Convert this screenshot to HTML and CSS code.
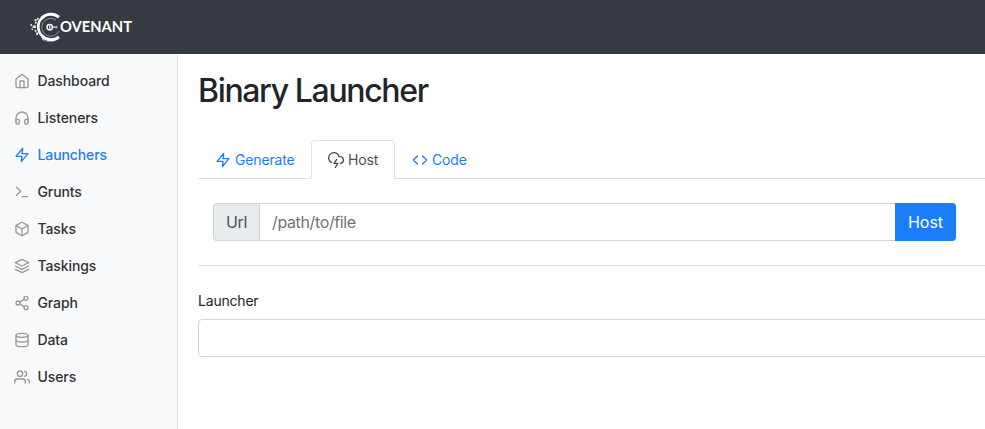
FILE: index.html
```html
<!DOCTYPE html>
<html lang="en">
<head>
<meta charset="utf-8">
<title>Covenant</title>
<link rel="stylesheet" href="styles.css">
</head>
<body>
<header class="navbar">
  <svg class="logo" width="104" height="32" viewBox="0 0 104 32" fill="none">
    <g stroke="#fff">
      <path d="M30 6.2A12.4 12.4 0 0 0 12.5 7.5" stroke-width="3"/>
      <path d="M14 6A12.4 12.4 0 0 0 14 25.5" stroke-width="2.6"/>
      <path d="M13 25A12.4 12.4 0 0 0 30 25.8" stroke-width="3"/>
      <path d="M27 9A9 9 0 1 0 30 20" stroke-width=".7" opacity=".6"/>
      <path d="M9.500 7A14 14 0 0 0 8.500 24" stroke-width="1.8" stroke-dasharray="2.5 1.6" opacity=".75"/>
      <path d="M13 28A14 14 0 0 0 25 29.500" stroke-width="1.2" stroke-dasharray="3 1.5" opacity=".7"/>
      <circle cx="20.7" cy="16.2" r="2.7" stroke-width="1.4"/>
      <path d="M20.7 14.8v3M23.500 16.200h2.500" stroke-width="1.2"/>
      <circle cx="27.3" cy="16.2" r=".8" stroke-width=".8"/>
    </g>
    <path fill="#fff" opacity=".8" d="M5.500 8h2v2h-2zM1.500 13h1.500v2H1.500zM3.500 14.500h2.500v2.500H3.500zM2.500 17.500h1.500v1.500H2.500zM7 21.500h2v2H7z"/>
    <path stroke="#fff" stroke-width="1.8" d="M54 11.300h5"/>
    <text class="wordmark" x="31" y="21" textLength="72" lengthAdjust="spacingAndGlyphs">OVENANT</text>
  </svg>
</header>
<div class="layout">
  <nav class="sidebar">
    <a class="item"><svg class="icon" viewBox="0 0 24 24"><path d="M3 9l9-7 9 7v11a2 2 0 0 1-2 2H5a2 2 0 0 1-2-2z"/><path d="M9 22V12h6v10"/></svg><span>Dashboard</span></a>
    <a class="item"><svg class="icon" viewBox="0 0 24 24"><path d="M3 18v-6a9 9 0 0 1 18 0v6"/><path d="M21 19a2 2 0 0 1-2 2h-1a2 2 0 0 1-2-2v-3a2 2 0 0 1 2-2h3zM3 19a2 2 0 0 0 2 2h1a2 2 0 0 0 2-2v-3a2 2 0 0 0-2-2H3z"/></svg><span>Listeners</span></a>
    <a class="item current"><svg class="icon" viewBox="0 0 24 24"><path d="M13 2L3 14h9l-1 8 10-12h-9l1-8z"/></svg><span>Launchers</span></a>
    <a class="item"><svg class="icon" viewBox="0 0 24 24"><path d="M4 17l6-6-6-6M12 19h8"/></svg><span>Grunts</span></a>
    <a class="item"><svg class="icon" viewBox="0 0 24 24"><path d="M21 16V8a2 2 0 0 0-1-1.73l-7-4a2 2 0 0 0-2 0l-7 4A2 2 0 0 0 3 8v8a2 2 0 0 0 1 1.730l7 4a2 2 0 0 0 2 0l7-4A2 2 0 0 0 21 16z"/><path d="M3.270 6.960L12 12.010l8.730-5.050M12 22.080V12"/></svg><span>Tasks</span></a>
    <a class="item"><svg class="icon" viewBox="0 0 24 24"><path d="M12 2L2 7l10 5 10-5-10-5zM2 17l10 5 10-5M2 12l10 5 10-5"/></svg><span>Taskings</span></a>
    <a class="item"><svg class="icon" viewBox="0 0 24 24"><circle cx="18" cy="5" r="3"/><circle cx="6" cy="12" r="3"/><circle cx="18" cy="19" r="3"/><path d="M8.590 13.510l6.830 3.980M15.410 6.510l-6.820 3.980"/></svg><span>Graph</span></a>
    <a class="item"><svg class="icon" viewBox="0 0 24 24"><ellipse cx="12" cy="5" rx="9" ry="3"/><path d="M21 12c0 1.660-4 3-9 3s-9-1.340-9-3"/><path d="M3 5v14c0 1.660 4 3 9 3s9-1.340 9-3V5"/></svg><span>Data</span></a>
    <a class="item"><svg class="icon" viewBox="0 0 24 24"><path d="M17 21v-2a4 4 0 0 0-4-4H5a4 4 0 0 0-4 4v2"/><circle cx="9" cy="7" r="4"/><path d="M23 21v-2a4 4 0 0 0-3-3.870M16 3.130a4 4 0 0 1 0 7.750"/></svg><span>Users</span></a>
  </nav>
  <main class="content">
    <h1 class="title"><span>Binary Launcher</span></h1>
    <div class="tabs">
      <a class="tab generate"><svg class="icon" viewBox="0 0 24 24"><path d="M13 2L3 14h9l-1 8 10-12h-9l1-8z"/></svg><span>Generate</span></a>
      <a class="tab host active"><svg class="icon" viewBox="0 0 24 24"><path d="M19 16.900A5 5 0 0 0 18 7h-1.260a8 8 0 1 0-11.620 9"/><path d="M13 11l-4 6h6l-4 6"/></svg><span>Host</span></a>
      <a class="tab"><svg class="icon" viewBox="0 0 24 24"><path d="M16 18l6-6-6-6M8 6l-6 6 6 6"/></svg><span>Code</span></a>
    </div>
    <div class="group">
      <span class="addon"><span>Url</span></span>
      <input class="field path" type="text" placeholder="/path/to/file">
      <button class="button"><span>Host</span></button>
    </div>
    <hr class="rule">
    <label class="label" for="launcher"><span>Launcher</span></label>
    <input class="field launcher" id="launcher" type="text">
  </main>
</div>
</body>
</html>
```
FILE: styles.css
```css
* { box-sizing: border-box; }
body {
  margin: 0;
  height: 429px;
  overflow: hidden;
  display: flex;
  flex-direction: column;
  background: #fff;
  color: #212529;
  font: 14px/21px Inter, "Liberation Sans", sans-serif;
}
.navbar {
  height: 54px;
  flex: none;
  background: #363a42;
  padding: 11px 0 0 29px;
}
.logo { display: block; }
.wordmark { font: 700 15px Lato, sans-serif; fill: #fff; }
.layout { flex: 1; display: flex; min-height: 0; }
.sidebar {
  width: 178px;
  flex: none;
  background: #f8f9fb;
  border-right: 1px solid #dcdddf;
  padding-top: 8px;
}
.item {
  display: flex;
  align-items: center;
  gap: 7.500px;
  height: 37px;
  padding-left: 14px;
  color: #333;
  font-weight: 500;
  letter-spacing: -.1px;
}
.icon {
  width: 16px;
  height: 16px;
  flex: none;
  fill: none;
  stroke: currentColor;
  stroke-width: 2;
  stroke-linecap: round;
  stroke-linejoin: round;
}
.item .icon { color: #999; }
.item.current, .item.current .icon { color: #1a7efb; }
.content { flex: none; width: 822px; padding: 18px 0 0 20px; }
.title {
  margin: 0;
  font-size: 32px;
  line-height: 38px;
  font-weight: 500;
  letter-spacing: -1.350px;
  height: 68px;
}
.tabs {
  display: flex;
  height: 39px;
  border-bottom: 1px solid #dee2e6;
}
.tab {
  display: flex;
  align-items: center;
  gap: 4px;
  height: 39px;
  padding: 0 16px;
  border: 1px solid transparent;
  border-radius: 4px 4px 0 0;
  color: #1a7efb;
  letter-spacing: -.15px;
}
.tab.generate { width: 113px; }
.tab.host { width: 84px; }
.tab.active { color: #495057; background: #fff; border-color: #dee2e6 #dee2e6 #fff; }
.group { display: flex; width: 743px; margin: 24px 0 0 15px; font-size: 16px; }
.addon {
  width: 46px;
  height: 38px;
  display: flex;
  align-items: center;
  justify-content: center;
  background: #e9ecef;
  border: 1px solid #ced4da;
  border-right: 0;
  border-radius: 4px 0 0 4px;
  color: #495057;
  letter-spacing: -.3px;
}
.field {
  height: 38px;
  padding: 0 12px;
  border: 1px solid #ced4da;
  border-radius: 4px;
  background: #fff;
  color: #495057;
  font: 16px Inter, "Liberation Sans", sans-serif;
}
.field::placeholder { color: #6c757d; opacity: 1; }
.path { flex: 1; min-width: 0; border-radius: 0; letter-spacing: -.370px; border-right: 0; }
.button {
  width: 61px;
  height: 38px;
  padding: 0;
  border: 0;
  border-radius: 0 4px 4px 0;
  background: #1a7efb;
  color: #fff;
  font: 16px Inter, "Liberation Sans", sans-serif;
}
.rule { margin: 24px 0; border: 0; border-top: 1px solid #dfe0e1; }
.label { display: block; margin-bottom: 8px; letter-spacing: -.2px; }
.launcher { display: block; width: 100%; }
```
